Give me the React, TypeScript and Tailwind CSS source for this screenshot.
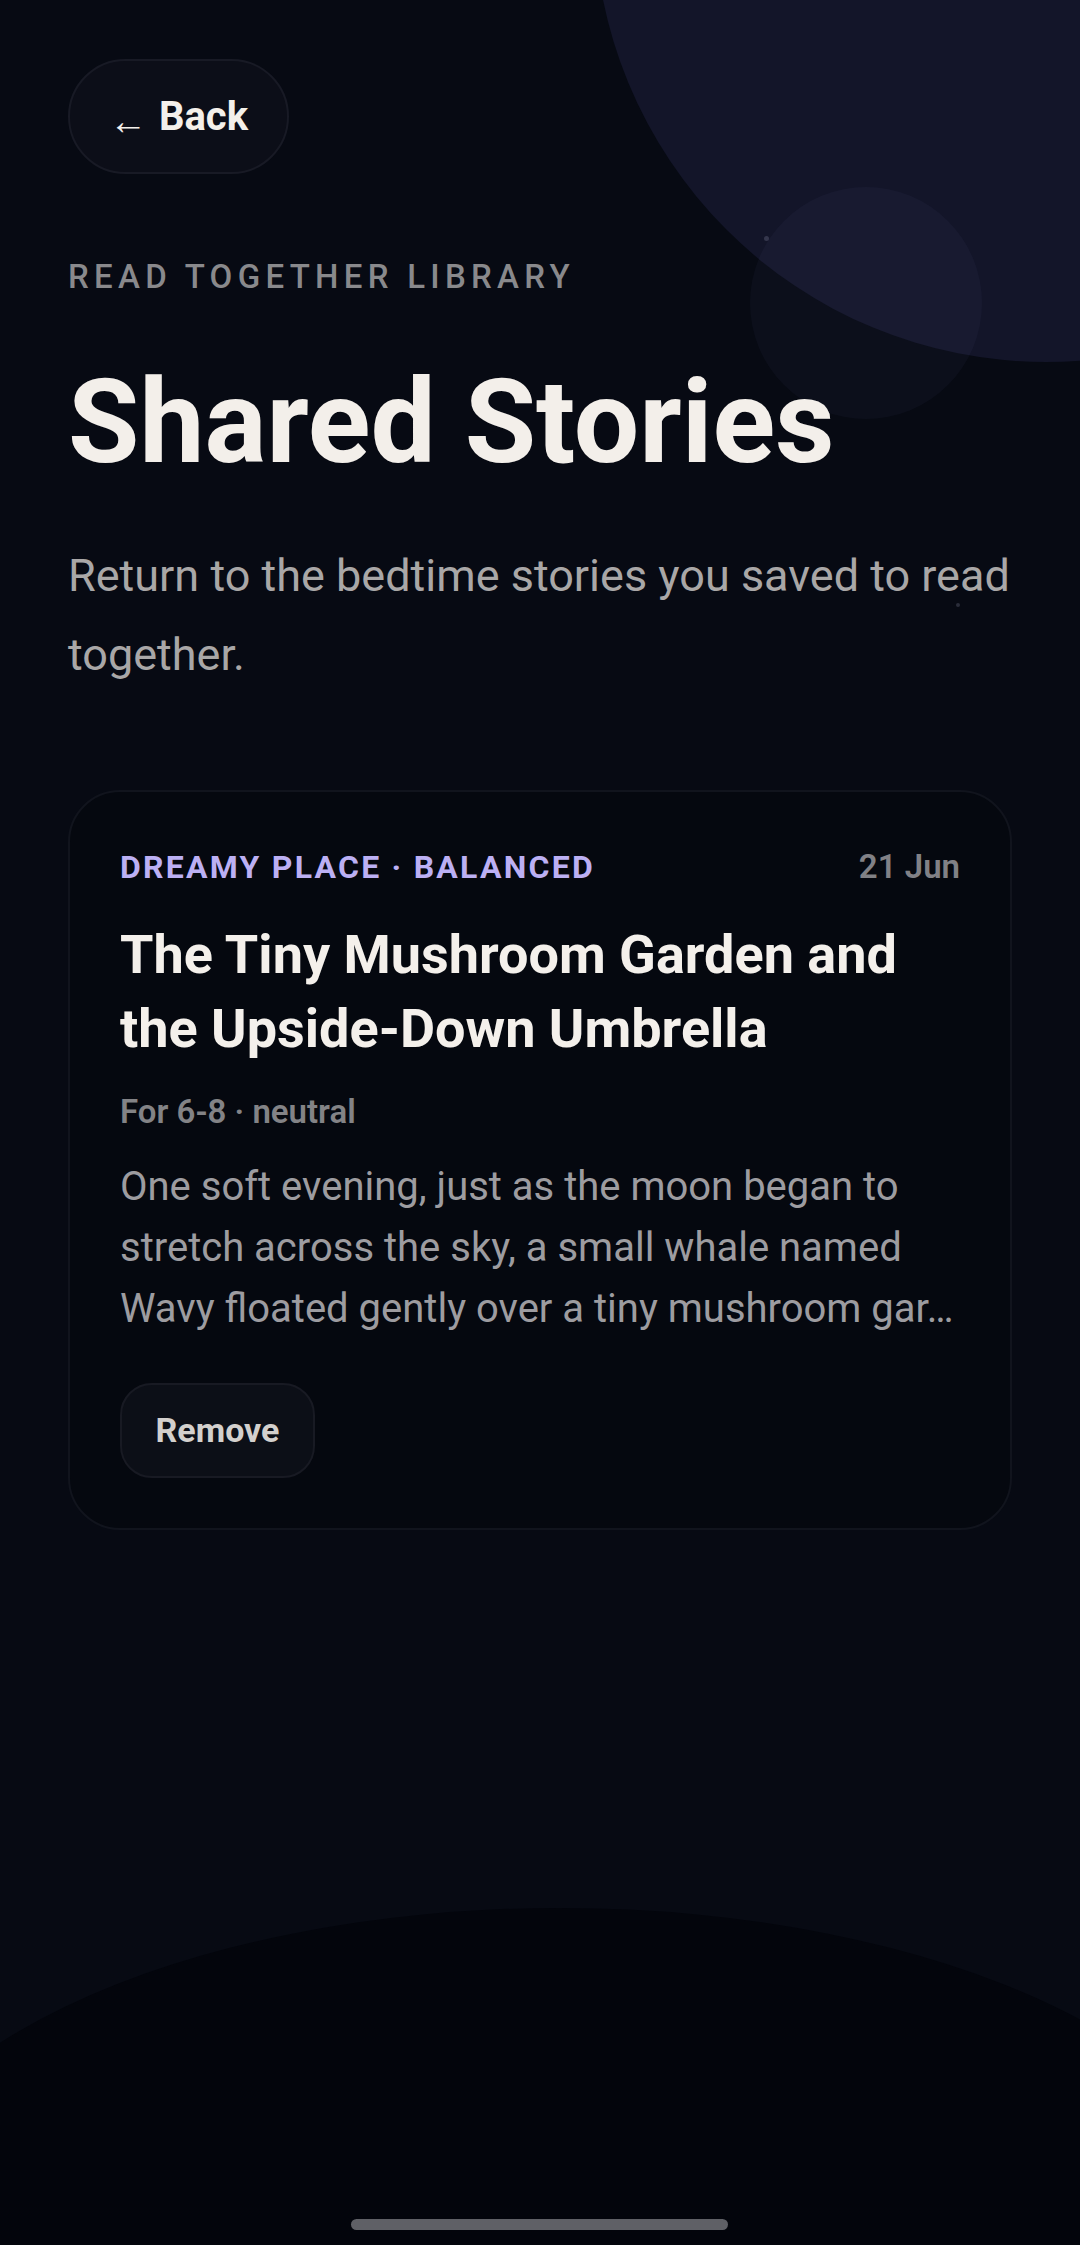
import React from 'react';

const story = {
  tags: 'Dreamy place · Balanced',
  date: '21 Jun',
  title: 'The Tiny Mushroom Garden and the Upside-Down Umbrella',
  meta: 'For 6-8 · neutral',
  // preview is cut mid-word, same as the saved snippet
  excerpt:
    'One soft evening, just as the moon began to stretch across the sky, a small whale named Wavy floated gently over a tiny mushroom gar…',
};

const StoryCard: React.FC = () => (
  <section className="mt-[96px] rounded-[52px] border-2 border-[#11141d] bg-[#05080f] px-[50px] pt-[55px] pb-[50px]">
    <div className="flex items-baseline justify-between">
      <span className="text-[32px] font-bold uppercase leading-[40px] tracking-[0.07em] text-[#bcb0f4]">
        {story.tags}
      </span>
      <span className="text-[33px] font-semibold leading-[40px] text-[#818186]">{story.date}</span>
    </div>
    <h2 className="mt-[31px] text-[54px] font-bold leading-[74px] text-[#f4f0eb]">{story.title}</h2>
    <p className="mt-[26px] text-[33px] font-semibold leading-[40px] text-[#838386]">{story.meta}</p>
    <p className="mt-[24px] line-clamp-3 text-[40px] leading-[61px] text-[#9d9ca0]">{story.excerpt}</p>
    <div className="mt-[44px] flex">
      <button className="flex h-[95px] w-[195px] items-center justify-center rounded-[32px] border-2 border-[#181a23] bg-[#0c0f17] text-[34px] font-bold text-[#d3d0cd]">
        Remove
      </button>
    </div>
  </section>
);

export default function App() {
  return (
    <div className="relative h-[2245px] w-[1080px] overflow-hidden bg-[#070a13] font-['Roboto',sans-serif]">
      {/* background blobs */}
      <div className="absolute left-[594px] top-[-542px] h-[904px] w-[904px] rounded-full bg-[#131529]" />
      <div className="absolute left-[750px] top-[187px] h-[232px] w-[232px] rounded-full bg-[#b4b4ff]/[0.035]" />
      <div className="absolute left-[-140px] top-[1908px] h-[674px] w-[1400px] rounded-[50%] bg-[#03050c]" />
      {/* tiny stars */}
      <div className="absolute left-[99px] top-[153px] h-[5px] w-[5px] rounded-full bg-[#2a2d3a]" />
      <div className="absolute left-[764px] top-[236px] h-[5px] w-[5px] rounded-full bg-[#34364c]" />
      <div className="absolute left-[956px] top-[603px] h-[4px] w-[4px] rounded-full bg-[#2a2d3a]" />

      <main className="relative flex flex-col items-start px-[68px] pt-[59px]">
        <button className="flex h-[115px] w-[221px] items-center justify-center gap-[12px] rounded-full border-2 border-[#181a25] bg-[#0c0e18] text-[#f4f0eb]">
          <span className="pt-[8px] text-[38px] font-bold leading-none">←</span>
          <span className="text-[40px] font-bold leading-none">Back</span>
        </button>

        <p className="mt-[84px] text-[33px] font-medium uppercase leading-[38px] tracking-[0.16em] text-[#89898c]">
          Read together library
        </p>
        <h1 className="mt-[67px] text-[116px] font-bold leading-[118px] text-[#f3efea]">Shared Stories</h1>
        <p className="mt-[55px] text-[45px] leading-[79px] text-[#a9a7a7]">
          Return to the bedtime stories you saved to read together.
        </p>

        <div className="self-stretch">
          <StoryCard />
        </div>
      </main>

      <div className="absolute left-[351px] top-[2219px] h-[11px] w-[377px] rounded-full bg-[#5f6066]" />
    </div>
  );
}
